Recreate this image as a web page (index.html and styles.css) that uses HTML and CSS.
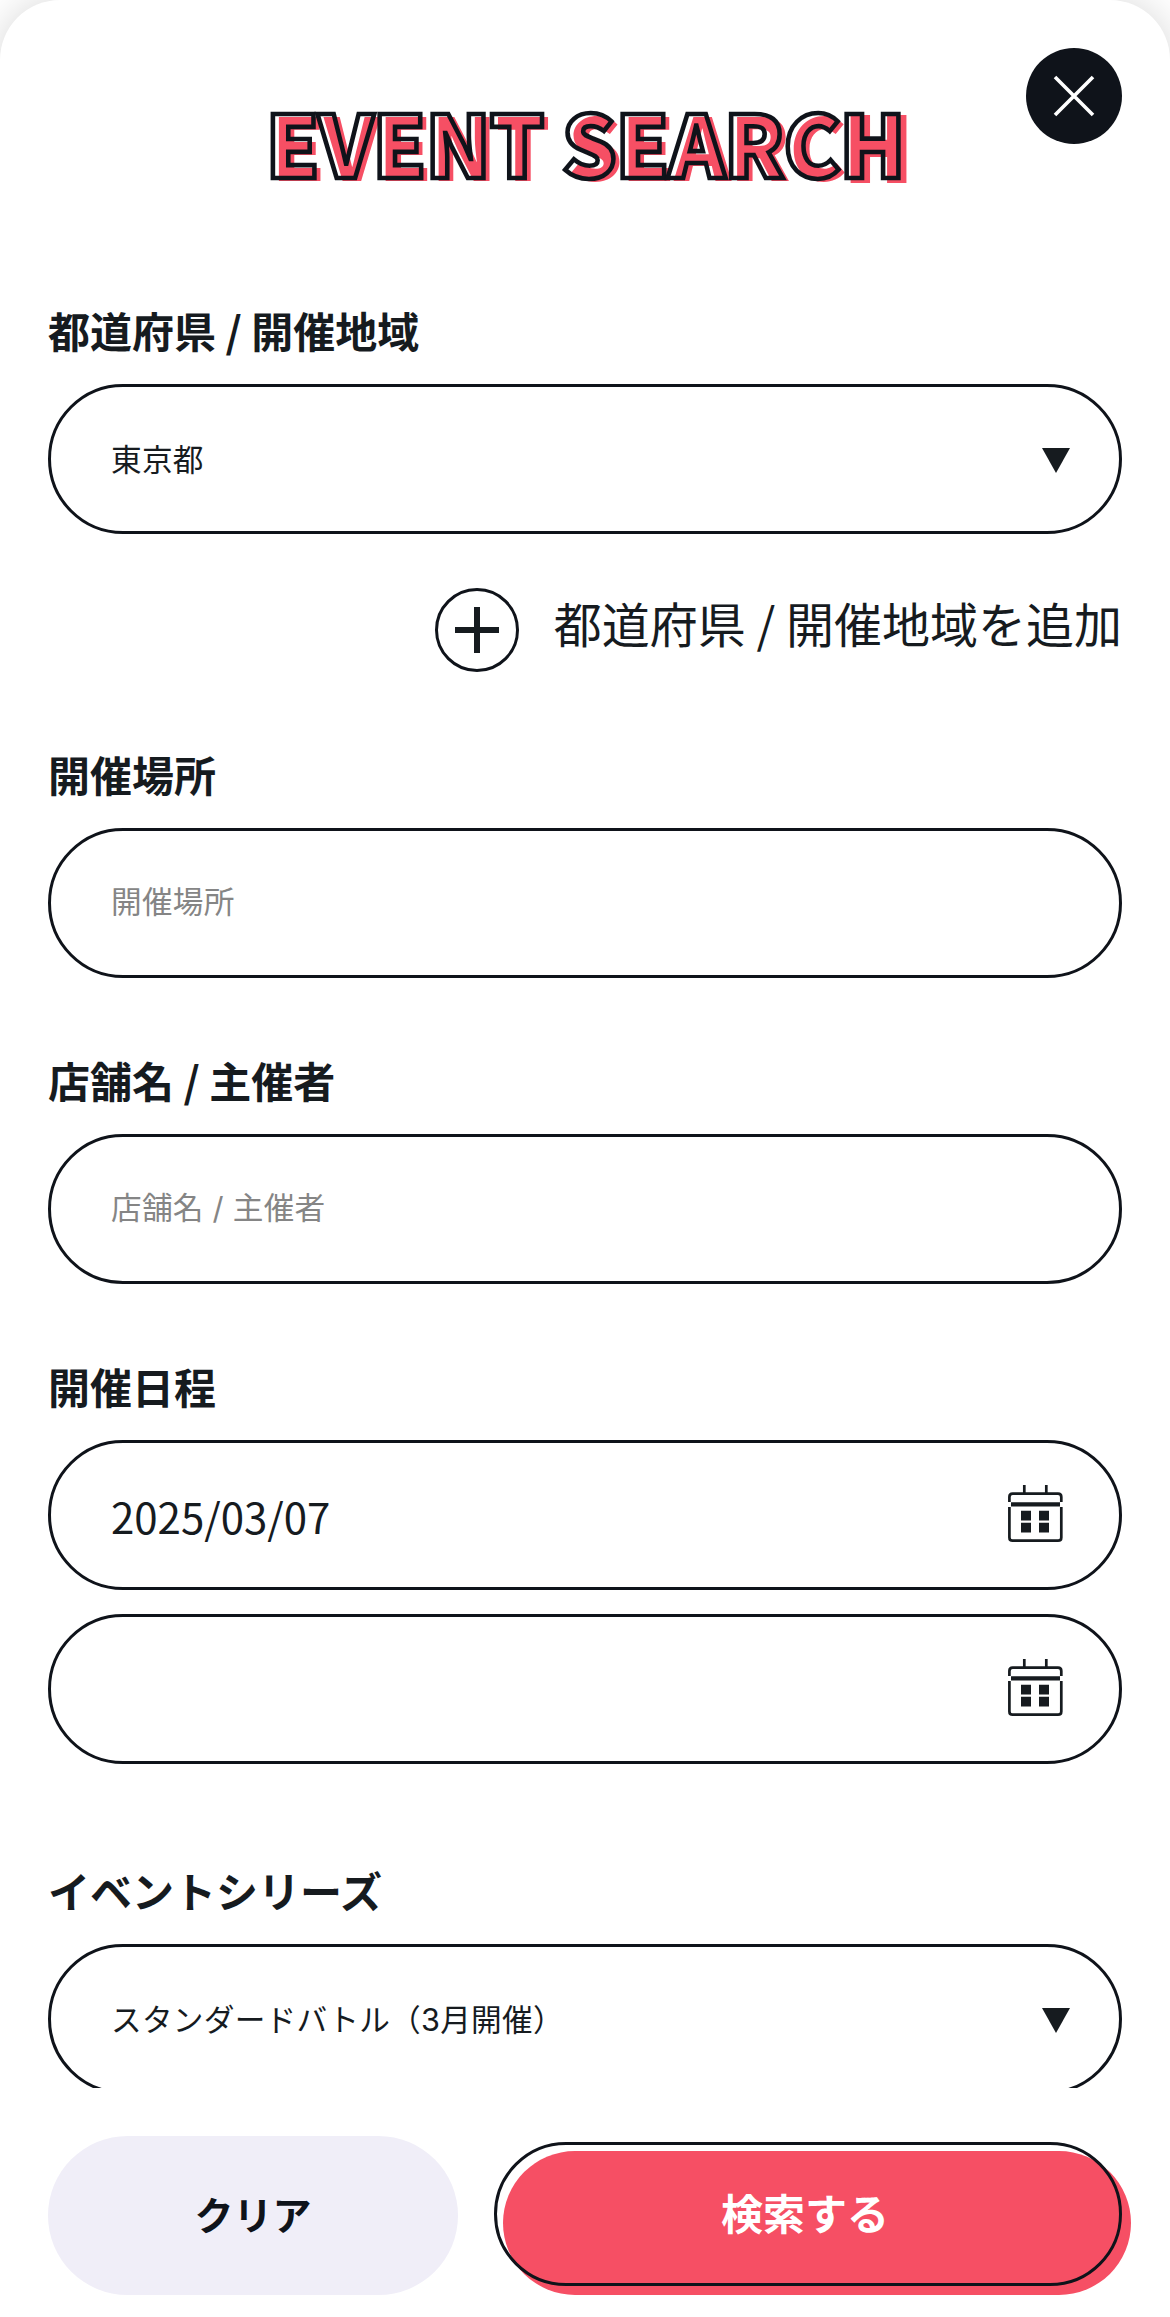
FILE: index.html
```html
<!DOCTYPE html>
<html lang="ja">
<head>
  <meta charset="UTF-8" />
  <meta name="viewport" content="width=device-width, initial-scale=1.0"/>
  <title>EVENT SEARCH</title>
  <link rel="stylesheet" href="styles.css">
</head>
<body>
  <form class="modal">
    <button type="button" class="close" aria-label="閉じる">
      <svg width="42" height="42" viewBox="0 0 42 42"><path d="M2 2L40 40M40 2L2 40" stroke="#fff" stroke-width="3.6"/></svg>
    </button>

    <div class="modal-body">
      <h1 class="title"><span class="title-text" data-text="EVENT SEARC">EVENT SEARC</span><span class="title-text title-last" data-text="H">H</span></h1>

      <section class="group">
        <h2 class="label">都道府県 / 開催地域</h2>
        <div class="field">
          <span class="value">東京都</span>
          <svg class="arrow" width="28" height="25" viewBox="0 0 28 25"><path d="M0 0H28L14 25Z"/></svg>
        </div>
        <div class="add">
          <span class="add-icon">
            <svg width="46" height="46" viewBox="0 0 46 46"><path d="M23 0V46M1 23H45" stroke="#161b1f" stroke-width="6"/></svg>
          </span>
          <span class="add-text">都道府県 / 開催地域を追加</span>
        </div>
      </section>

      <section class="group">
        <h2 class="label">開催場所</h2>
        <div class="field"><span class="value placeholder">開催場所</span></div>
      </section>

      <section class="group">
        <h2 class="label">店舗名 / 主催者</h2>
        <div class="field"><span class="value placeholder">店舗名 / 主催者</span></div>
      </section>

      <section class="group group-date">
        <h2 class="label">開催日程</h2>
        <div class="field">
          <span class="date">2025/03/07</span>
          <svg class="calendar" width="56" height="58" viewBox="0 0 56 58">
            <path d="M16.3 0V8M38.3 0V8" class="cal-line"/>
            <path d="M1.4 17V12Q1.4 8.7 4.7 8.7H50Q53.3 8.7 53.3 12V17M1.4 22V52.4Q1.4 55.7 4.7 55.7H50Q53.3 55.7 53.3 52.4V22" class="cal-line"/>
            <path d="M3 17.3H52V21.5H3ZM13 25.7H23V35.4H13ZM31 25.7H41V35.4H31ZM13 37.7H23V47.4H13ZM31 37.7H41V47.4H31Z"/>
          </svg>
        </div>
        <div class="field">
          <span class="date"></span>
          <svg class="calendar" width="56" height="58" viewBox="0 0 56 58">
            <path d="M16.3 0V8M38.3 0V8" class="cal-line"/>
            <path d="M1.4 17V12Q1.4 8.7 4.7 8.7H50Q53.3 8.7 53.3 12V17M1.4 22V52.4Q1.4 55.7 4.7 55.7H50Q53.3 55.7 53.3 52.4V22" class="cal-line"/>
            <path d="M3 17.3H52V21.5H3ZM13 25.7H23V35.4H13ZM31 25.7H41V35.4H31ZM13 37.7H23V47.4H13ZM31 37.7H41V47.4H31Z"/>
          </svg>
        </div>
      </section>

      <section class="group">
        <h2 class="label">イベントシリーズ</h2>
        <div class="field">
          <span class="value">スタンダードバトル（3月開催）</span>
          <svg class="arrow" width="28" height="25" viewBox="0 0 28 25"><path d="M0 0H28L14 25Z"/></svg>
        </div>
      </section>
    </div>

    <footer class="actions">
      <button type="reset" class="clear">クリア</button>
      <button type="submit" class="search">検索する</button>
    </footer>
  </form>
</body>
</html>
```
FILE: styles.css
```css
*,
*::before,
*::after {
  box-sizing: border-box;
}

body {
  margin: 0;
  background-color: #fff;
  color: #161b1f;
  font-family: "Noto Sans CJK JP", sans-serif;
}

button {
  border: none;
  padding: 0;
  font-family: inherit;
  font-weight: 700;
  cursor: pointer;
}

.modal {
  position: relative;
  display: flex;
  flex-direction: column;
  height: 2317px;
  overflow: hidden;
  background-color: #fff;
  border-radius: 60px 60px 0 0;
  box-shadow: 0 0 40px rgba(0, 0, 0, 0.16);
}

.close {
  position: absolute;
  top: 48px;
  right: 48px;
  display: flex;
  justify-content: center;
  align-items: center;
  width: 96px;
  height: 96px;
  border-radius: 50%;
  background-color: #0f131a;
}

.modal-body {
  height: 2088px;
  padding: 79px 48px 0;
  overflow: hidden;
}

/* outlined title over an offset red copy */
.title {
  display: flex;
  justify-content: center;
  height: 124px;
  margin: 0 0 96px;
  font-size: 86px;
  font-weight: 900;
  line-height: 124px;
  letter-spacing: -1.3px;
  white-space: nowrap;
}

.title-text {
  position: relative;
  z-index: 0;
  color: transparent;
  -webkit-text-stroke: 4.6px #0f131a;
}

.title-text::before {
  content: attr(data-text);
  position: absolute;
  z-index: -1;
  top: 3px;
  left: 6px;
  color: #f64f64;
  -webkit-text-stroke: 0;
}

.title-last::before {
  -webkit-text-stroke: 4px #f64f64;
}

.group {
  margin-bottom: 71px;
}

.group-date {
  margin-bottom: 95px;
}

.label {
  margin: 0 0 23px;
  font-size: 42px;
  font-weight: 700;
  line-height: 62px;
}

.field {
  display: flex;
  justify-content: space-between;
  align-items: center;
  height: 150px;
  padding: 0 49px 0 60px;
  border: 3px solid #0f131a;
  border-radius: 75px;
}

.field + .field {
  margin-top: 24px;
}

.value {
  padding-top: 2px;
  font-family: Inter, "Noto Sans CJK JP", sans-serif;
  font-size: 30.67px;
  line-height: 44px;
  letter-spacing: 0.25px;
}

.placeholder {
  padding: 0 0 2px;
  color: #858585;
}

.date {
  padding-top: 2px;
  font-size: 42px;
  line-height: 60px;
}

.arrow {
  margin-top: 3px;
  fill: #161b1f;
}

.calendar {
  margin: 0 6px 3px 0;
  fill: #161b1f;
}

.cal-line {
  fill: none;
  stroke: #161b1f;
  stroke-width: 2.7;
}

.add {
  display: flex;
  justify-content: flex-end;
  align-items: center;
  height: 84px;
  margin-top: 54px;
}

.add-icon {
  display: flex;
  justify-content: center;
  align-items: center;
  width: 84px;
  height: 84px;
  margin-right: 35px;
  border: 3px solid #0f131a;
  border-radius: 50%;
}

.add-text {
  padding-bottom: 16px;
  font-size: 48px;
  line-height: 70px;
}

.actions {
  display: flex;
  align-items: flex-start;
  gap: 36px;
  padding: 48px 48px 0;
}

.clear {
  width: 410px;
  height: 159px;
  padding-bottom: 6px;
  border-radius: 80px;
  background-color: #f0eef8;
  color: #0f131a;
  font-size: 39px;
}

.search {
  position: relative;
  z-index: 0;
  flex: 1;
  height: 144px;
  margin-top: 6px;
  padding: 0 6px 6px 0;
  background: none;
  color: #fff;
  font-size: 42px;
}

.search::before,
.search::after {
  content: "";
  position: absolute;
  z-index: -1;
  width: 100%;
  height: 100%;
  border-radius: 72px;
}

.search::before {
  top: 9px;
  left: 9px;
  background-color: #f64f64;
}

.search::after {
  top: 0;
  left: 0;
  border: 3px solid #0f131a;
}
```
